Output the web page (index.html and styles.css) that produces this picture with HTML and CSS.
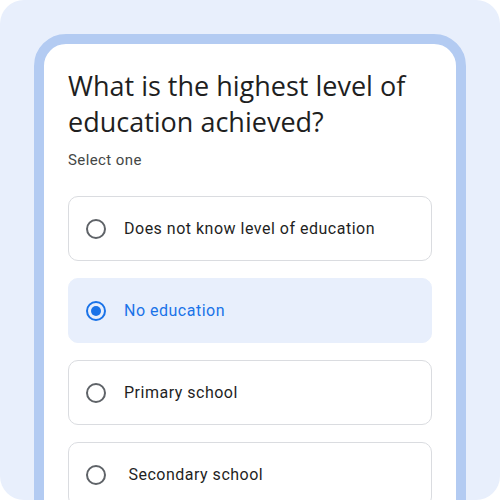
FILE: index.html
```html
<!DOCTYPE html>
<html lang="en">
<head>
  <meta charset="UTF-8" />
  <title>Education question</title>
  <link rel="stylesheet" href="styles.css">
</head>
<body>
  <div class="backdrop">
    <div class="phone">
      <div class="screen">
        <h1 class="question">What is the highest level of education achieved?</h1>
        <p class="hint">Select one</p>

        <div class="options">
          <label class="option">
            <span class="radio"></span>
            <span class="option-text">Does not know level of education</span>
          </label>
          <label class="option selected">
            <span class="radio"></span>
            <span class="option-text">No education</span>
          </label>
          <label class="option">
            <span class="radio"></span>
            <span class="option-text">Primary school</span>
          </label>
          <label class="option">
            <span class="radio"></span>
            <span class="option-text">&nbsp;Secondary school</span>
          </label>
        </div>
      </div>
    </div>
  </div>
</body>
</html>
```

FILE: styles.css
```css
* {
  margin: 0;
  box-sizing: border-box;
}
body {
  background-color: #fff;
  font-family: Roboto, "Liberation Sans", sans-serif;
}
.backdrop {
  width: 500px;
  height: 500px;
  background-color: #e8effc;
  border-radius: 24px;
  padding: 34px 34px 0;
  overflow: hidden;
}
.phone {
  height: 520px;
  border: 10px solid #b3cbf2;
  border-radius: 32px;
  background-color: #fff;
  overflow: hidden;
}
.screen {
  padding: 24px 24px 0;
}
.question {
  font-family: "Open Sans", sans-serif;
  font-weight: 400;
  font-size: 27px;
  line-height: 36px;
  color: #1f1f1f;
}
.hint {
  margin-top: 10px;
  font-size: 15px;
  letter-spacing: 0.4px;
  line-height: 20px;
  color: #444746;
}
.options {
  display: grid;
  gap: 17px;
  margin-top: 26px;
}
.option {
  display: flex;
  align-items: center;
  gap: 18px;
  height: 65px;
  padding: 0 17px;
  border: 1px solid #dadce0;
  border-radius: 10px;
  font-size: 16px;
  letter-spacing: 0.5px;
  color: #1f1f1f;
}
.radio {
  width: 20px;
  height: 20px;
  border: 2px solid #5f6368;
  border-radius: 50%;
  flex-shrink: 0;
  position: relative;
}
.option.selected {
  background-color: #e8effc;
  border-color: #e8effc;
  color: #1a73e8;
}
.option.selected .radio {
  border-color: #1a73e8;
}
.option.selected .radio::after {
  content: "";
  position: absolute;
  top: 3px;
  left: 3px;
  width: 10px;
  height: 10px;
  border-radius: 50%;
  background-color: #1a73e8;
}
```
